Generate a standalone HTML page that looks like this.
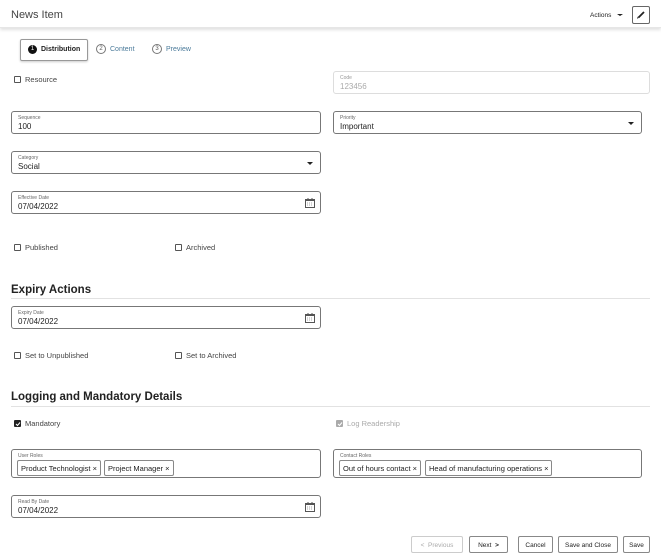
<!DOCTYPE html>
<html><head><meta charset="utf-8"><style>
*{box-sizing:border-box;margin:0;padding:0}
body{width:661px;height:555px;background:#fff;font-family:"Liberation Sans",sans-serif;color:#333;position:relative;overflow:hidden;font-size:8px}
.a{position:absolute}
.hdr{left:0;top:0;width:661px;height:28px;box-shadow:0 2px 3px rgba(0,0,0,.12);border-bottom:1px solid #e6e6e6}
.f{position:absolute;border:1px solid #777;border-radius:3px;background:#fff}
.f .l{position:absolute;left:6px;top:3px;font-size:5px;color:#666}
.f .v{position:absolute;left:6px;top:10px;font-size:8px;color:#222}
.cb{position:absolute;width:7px;height:7px;border:1px solid #555;border-radius:1px}
.lbl{position:absolute;font-size:7.5px;color:#444}
.h{position:absolute;font-size:11.5px;font-weight:bold;color:#222}
.line{position:absolute;height:1px;background:#e2e2e2}
.caret{position:absolute;width:0;height:0;border-left:3px solid transparent;border-right:3px solid transparent;border-top:3px solid #222}
.chip{position:absolute;top:10px;height:16px;border:1px solid #888;border-radius:2px;font-size:7.5px;padding:3px 3px;white-space:nowrap;color:#222}
.btn{position:absolute;top:536px;height:17px;border:1px solid #888;border-radius:2px;font-size:6.5px;text-align:center;line-height:15px;color:#222;background:#fff;padding-top:1px}
</style></head><body>
<div class="a hdr"></div>
<div class="a" style="left:11px;top:9px;font-size:11px;color:#444">News Item</div>
<div class="a" style="left:590px;top:12px;font-size:6.5px;color:#222">Actions</div>
<div class="caret" style="left:617px;top:14px;border-top-width:2.5px"></div>
<div class="a" style="left:632px;top:6px;width:18px;height:18px;border:1px solid #666;border-radius:2px"></div>
<svg class="a" style="left:636px;top:10px" width="10" height="10" viewBox="0 0 10 10"><path d="M2.5 7.5 L8 2" stroke="#222" stroke-width="1.8"/><path d="M1.5 8.5 L2.3 6.8" stroke="#222" stroke-width="1"/></svg>

<div class="a" style="left:20px;top:39px;width:68px;height:22px;border:1px solid #999;border-radius:2px;box-shadow:0 1px 2px rgba(0,0,0,.2)"></div>
<div class="a" style="left:28px;top:45px;width:9px;height:9px;border-radius:50%;background:#111;color:#fff;font-size:6px;text-align:center;line-height:9px">1</div>
<div class="a" style="left:41px;top:46px;font-size:7px;font-weight:bold;color:#222">Distribution</div>
<div class="a" style="left:96px;top:44px;width:10px;height:10px;border-radius:50%;border:1px solid #777;font-size:6px;text-align:center;line-height:8px;color:#555">2</div>
<div class="a" style="left:110px;top:46px;font-size:7px;color:#4a7a9a">Content</div>
<div class="a" style="left:152px;top:44px;width:10px;height:10px;border-radius:50%;border:1px solid #777;font-size:6px;text-align:center;line-height:8px;color:#555">3</div>
<div class="a" style="left:166px;top:46px;font-size:7px;color:#4a7a9a">Preview</div>

<div class="cb" style="left:14px;top:76px"></div><div class="lbl" style="left:25px;top:75px">Resource</div>
<div class="f" style="left:333px;top:71px;width:317px;height:23px;border-color:#ddd"><div class="l" style="color:#999">Code</div><div class="v" style="color:#aaa">123456</div></div>

<div class="f" style="left:11px;top:111px;width:310px;height:23px"><div class="l">Sequence</div><div class="v">100</div></div>
<div class="f" style="left:333px;top:111px;width:309px;height:23px"><div class="l">Priority</div><div class="v">Important</div><div class="caret" style="left:294px;top:10px"></div></div>
<div class="f" style="left:11px;top:151px;width:310px;height:23px"><div class="l">Category</div><div class="v">Social</div><div class="caret" style="left:295px;top:10px"></div></div>

<svg width="0" height="0" style="position:absolute"><defs><g id="cal"><rect x="0.5" y="1.5" width="9" height="8" fill="none" stroke="#555"/><rect x="0.5" y="1.5" width="9" height="1.5" fill="#555"/><path d="M3 0v2M7 0v2" stroke="#555"/><path d="M2 5h6M2 7h6" stroke="#555" stroke-width=".6" stroke-dasharray="1 1"/></g></defs></svg>

<div class="f" style="left:11px;top:191px;width:310px;height:23px"><div class="l">Effective Date</div><div class="v">07/04/2022</div><svg class="a" style="left:293px;top:6px" width="10" height="10"><use href="#cal"/></svg></div>

<div class="cb" style="left:14px;top:244px"></div><div class="lbl" style="left:25px;top:243px">Published</div>
<div class="cb" style="left:175px;top:244px"></div><div class="lbl" style="left:186px;top:243px">Archived</div>

<div class="h" style="left:11px;top:284px">Expiry Actions</div>
<div class="line" style="left:11px;top:298px;width:639px"></div>
<div class="f" style="left:11px;top:306px;width:310px;height:23px"><div class="l">Expiry Date</div><div class="v">07/04/2022</div><svg class="a" style="left:293px;top:6px" width="10" height="10"><use href="#cal"/></svg></div>

<div class="cb" style="left:14px;top:352px"></div><div class="lbl" style="left:25px;top:351px">Set to Unpublished</div>
<div class="cb" style="left:175px;top:352px"></div><div class="lbl" style="left:186px;top:351px">Set to Archived</div>

<div class="h" style="left:11px;top:391px">Logging and Mandatory Details</div>
<div class="line" style="left:11px;top:406px;width:639px"></div>

<div class="cb" style="left:14px;top:420px;background:#222;border-color:#222"></div><svg class="a" style="left:15px;top:421px" width="6" height="6"><path d="M1 3l1.5 1.5L5 1.5" stroke="#fff" fill="none"/></svg>
<div class="lbl" style="left:25px;top:419px">Mandatory</div>
<div class="cb" style="left:336px;top:420px;background:#aaa;border-color:#aaa"></div><svg class="a" style="left:337px;top:421px" width="6" height="6"><path d="M1 3l1.5 1.5L5 1.5" stroke="#fff" fill="none"/></svg>
<div class="lbl" style="left:347px;top:419px;color:#aaa">Log Readership</div>

<div class="f" style="left:11px;top:449px;width:310px;height:29px"><div class="l">User Roles</div>
<div class="chip" style="left:5px">Product Technologist ×</div><div class="chip" style="left:92px">Project Manager ×</div></div>
<div class="f" style="left:333px;top:449px;width:309px;height:29px"><div class="l">Contact Roles</div>
<div class="chip" style="left:5px">Out of hours contact ×</div><div class="chip" style="left:91px">Head of manufacturing operations ×</div></div>

<div class="f" style="left:11px;top:495px;width:310px;height:23px"><div class="l">Read By Date</div><div class="v">07/04/2022</div><svg class="a" style="left:293px;top:6px" width="10" height="10"><use href="#cal"/></svg></div>

<div class="btn" style="left:411px;width:52px;border-color:#ccc;color:#aaa">&lt;&nbsp; Previous</div>
<div class="btn" style="left:469px;width:39px">Next &nbsp;<b>&gt;</b></div>
<div class="btn" style="left:518px;width:35px">Cancel</div>
<div class="btn" style="left:558px;width:60px">Save and Close</div>
<div class="btn" style="left:623px;width:27px">Save</div>
</body></html>
